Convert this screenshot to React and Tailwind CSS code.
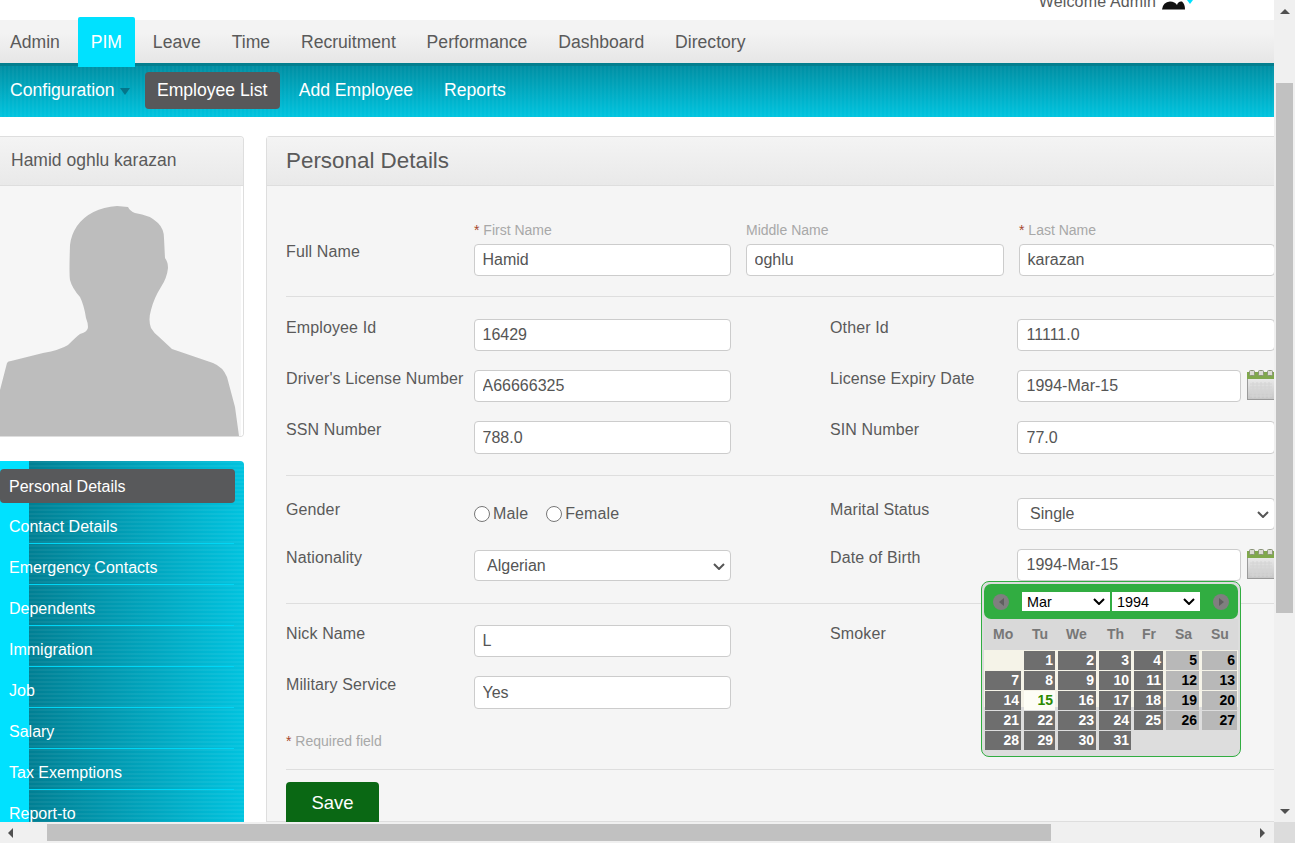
const NAV_ITEMS = ['Admin', 'PIM', 'Leave', 'Time', 'Recruitment', 'Performance', 'Dashboard', 'Directory'];

const SIDE_ITEMS = ['Contact Details', 'Emergency Contacts', 'Dependents', 'Immigration', 'Job', 'Salary', 'Tax Exemptions', 'Report-to'];

const WEEKDAYS = [
  { label: 'Mo', align: 'pl-[8px]' },
  { label: 'Tu', align: 'pl-[8px]' },
  { label: 'We', align: 'pl-[8px]' },
  { label: 'Th', align: 'pl-[8px]' },
  { label: 'Fr', align: 'pl-[8px]' },
  { label: 'Sa', align: 'pl-[9px]' },
  { label: 'Su', align: 'pl-[9px]' },
];

const SILHOUETTE =
  'M117 16 L128 17 Q130 21 135 23 Q150 25 158 33 Q164 39 164 48 L165 68 Q168 72 168 78 Q167 88 161 97 Q154 108 151 120 Q148 130 151 138 Q154 143 158 146 L172 159 L213 173 Q223 177 227 187 L235 217 L239 246 L0 246 L0 200 L7 173 Q8 171 11 171 L43 163 Q60 160 68 155 Q76 147 80 144 Q88 142 88 137 Q88 133 86 128 Q84 115 80 107 Q72 98 70 90 Q69 84 70 55 Q71 45 77 36 Q90 18 117 16 Z';

function CalendarIcon({ id }) {
  return (
    <svg width="28" height="30" viewBox="0 0 28 30" className="shrink-0 ml-[6px]">
      <defs>
        <linearGradient id={id} x1="0" y1="0" x2="0" y2="1">
          <stop offset="0" stopColor="#f2f2f2" />
          <stop offset="1" stopColor="#c6c6c6" />
        </linearGradient>
      </defs>
      <rect x="0.5" y="3.5" width="27" height="26" fill={`url(#${id})`} stroke="#9a9a9a" />
      <path d="M3 14h22M3 17h22M3 20h22M3 23h22M3 26h22M6 12v16M10 12v16M14 12v16M18 12v16M22 12v16" stroke="#d4d4d4" strokeWidth="1" />
      <rect x="0" y="2" width="28" height="7" fill="#80a84c" />
      <rect x="2.5" y="0.5" width="5" height="5" rx="1" fill="#dcdcd4" stroke="#8a9478" />
      <rect x="11.5" y="0.5" width="5" height="5" rx="1" fill="#dcdcd4" stroke="#8a9478" />
      <rect x="20.5" y="0.5" width="5" height="5" rx="1" fill="#dcdcd4" stroke="#8a9478" />
    </svg>
  );
}

function Chevron({ className }) {
  return (
    <svg width="12" height="7" viewBox="0 0 12 7" className={`absolute pointer-events-none ${className}`}>
      <path d="M1 1 L6 6 L11 1" fill="none" stroke="currentColor" strokeWidth="2" />
    </svg>
  );
}

function TextInput({ value, width = 'w-[257px]', height = 'h-[32px]', pad = 'px-[7.5px]' }) {
  return (
    <input
      type="text"
      defaultValue={value}
      className={`${width} ${height} ${pad} shrink-0 bg-white border border-[#cccccc] rounded-[4px] text-[16px] text-[#555555]`}
    />
  );
}

function SelectInput({ value, width, height, className = '' }) {
  return (
    <div className={`relative shrink-0 ${width} ${height} ${className}`}>
      <select
        defaultValue={value}
        className="block appearance-none w-full h-full pl-[12px] bg-white border border-[#cccccc] rounded-[4px] text-[16px] text-[#555555]"
      >
        <option>{value}</option>
      </select>
      <Chevron className="right-[6px] top-[13px] text-[#555555]" />
    </div>
  );
}

function CalendarSelect({ value, className = '' }) {
  return (
    <div className={`relative w-[88px] h-[19px] shrink-0 ${className}`}>
      <select defaultValue={value} className="block appearance-none w-full h-full pl-[5px] bg-white text-[14.4px] leading-[16px] text-black">
        <option>{value}</option>
      </select>
      <Chevron className="right-[5px] top-[6px] text-black" />
    </div>
  );
}

function Label({ children, width = 'w-[188px]', top = 'pt-0' }) {
  return <div className={`${width} ${top} shrink-0 text-[16px] leading-[18px] tracking-[0.12px] text-[#5a5a5a]`}>{children}</div>;
}

function NameField({ label, value, required, width }) {
  return (
    <div className={`${width} flex flex-col shrink-0`}>
      <div className="h-[22px] text-[14px] leading-[16px] text-[#a8a8a8]">
        {required && <span className="text-[#a5482c]">* </span>}
        {label}
      </div>
      <TextInput value={value} width="w-full" />
    </div>
  );
}

function Separator({ className }) {
  return <div className={`h-px bg-[#dedede] ${className}`} />;
}

function DatePicker() {
  const days = [];
  for (let d = 1; d <= 31; d++) days.push(d);
  return (
    <div className="absolute left-[-36px] top-[32px] z-20 w-[260px] h-[176px] bg-[#dddddd] border border-[#31ad41] rounded-[8px] p-[2px]">
      <div className="h-[35px] bg-[#31ad41] rounded-[7px] flex items-center pl-[9px]">
        <div className="w-[16px] h-[16px] rounded-full bg-[#7f7f7f] flex items-center justify-center">
          <div className="w-0 h-0 border-y-[4px] border-y-transparent border-r-[5px] border-r-[#5f5f5f]" />
        </div>
        <CalendarSelect value="Mar" className="ml-[13px]" />
        <CalendarSelect value="1994" className="ml-[2px]" />
        <div className="ml-[13px] w-[16px] h-[16px] rounded-full bg-[#7f7f7f] flex items-center justify-center">
          <div className="w-0 h-0 border-y-[4px] border-y-transparent border-l-[5px] border-l-[#5f5f5f]" />
        </div>
      </div>
      <div className="h-[31px] bg-[#d9d9d9] grid grid-cols-[36px_31px_38px_32px_29px_33px_35px] gap-x-[3px] pl-[1px] items-center text-[14px] font-bold text-[#777777]">
        {WEEKDAYS.map((w) => (
          <div key={w.label} className={w.align}>{w.label}</div>
        ))}
      </div>
      <div className="bg-[linear-gradient(180deg,#f5f3e8_57px,#dddddd_57px)] pt-px pl-px grid grid-cols-[36px_31px_38px_32px_29px_33px_35px] gap-x-[3px] gap-y-px auto-rows-[19px] text-[14px] leading-[19px] font-bold text-right">
        <div />
        {days.map((d) => {
          const col = d % 7;
          const weekend = col === 5 || col === 6;
          if (d === 15) {
            return <div key={d} className="bg-[#fdfdf5] text-[#2c8a00] pr-[2px]">{d}</div>;
          }
          return (
            <div key={d} className={`pr-[2px] ${weekend ? 'bg-[#b8b8b8] text-black' : 'bg-[#6e6e6e] text-white'}`}>{d}</div>
          );
        })}
      </div>
    </div>
  );
}

function Sidebar() {
  return (
    <div className="w-[244px] shrink-0 flex flex-col">
      <div className="h-[301px] shrink-0 flex flex-col border border-l-0 border-[#dedede] rounded-tr-[4px] rounded-br-[4px] overflow-hidden">
        <div className="h-[49px] shrink-0 border-b border-[#dedede] bg-[linear-gradient(180deg,#f4f4f4,#e9e9e9)] pl-[11px] pb-[2px] flex items-center text-[17.5px] text-[#5a5a5a]">
          Hamid oghlu karazan
        </div>
        <div className="flex-1 bg-[#f6f6f6] border-r-[2px] border-white">
          <svg width="241" height="250" viewBox="0 0 241 250" className="block">
            <path d={SILHOUETTE} transform="translate(0 4)" fill="#bdbdbd" />
          </svg>
        </div>
      </div>
      <div className="mt-[24px] shrink-0 rounded-tr-[4px] pt-[8px] bg-[linear-gradient(90deg,#00e1ff_29px,transparent_29px),repeating-linear-gradient(180deg,rgba(255,255,255,0.05)_0_2px,transparent_2px_4px),linear-gradient(90deg,#007f93_29px,#00c3df_100%)] text-[16px] text-white">
        <div className="w-[235px] h-[34px] flex items-center pl-[9px] pt-[2px] bg-[#58595b] rounded-[4px]">Personal Details</div>
        {SIDE_ITEMS.map((item) => (
          <div key={item} className="h-[41px] flex flex-col">
            <div className="h-[40px] pl-[9px] pt-[14px] leading-[20px]">{item}</div>
            <div className="h-px ml-[29px] mr-[10px] bg-[#00d6f5]" />
          </div>
        ))}
      </div>
    </div>
  );
}

function PersonalDetails() {
  return (
    <div className="ml-[22px] flex-1 min-w-0 border border-r-0 border-[#dedede] rounded-tl-[4px] bg-[#f5f5f5]">
      <div className="h-[49px] border-b border-[#dedede] bg-[linear-gradient(180deg,#f4f4f4,#e9e9e9)] pl-[19px] flex items-center text-[22.4px] text-[#5a5a5a]">
        Personal Details
      </div>
      <div className="pl-[19px] pt-[36px]">
        <div className="flex">
          <Label top="pt-[21px]">Full Name</Label>
          <div className="flex gap-[15px]">
            <NameField label="First Name" value="Hamid" required width="w-[257px]" />
            <NameField label="Middle Name" value="oghlu" width="w-[258px]" />
            <NameField label="Last Name" value="karazan" required width="w-[256px]" />
          </div>
        </div>
        <Separator className="mt-[20px]" />

        <div className="mt-[22px] flex">
          <Label>Employee Id</Label>
          <TextInput value="16429" />
          <Label width="w-[187px] ml-[99px]">Other Id</Label>
          <TextInput value="11111.0" width="w-[258px]" pad="px-[8.5px]" />
        </div>
        <div className="mt-[19px] flex">
          <Label>Driver's License Number</Label>
          <TextInput value="A66666325" />
          <Label width="w-[187px] ml-[99px]">License Expiry Date</Label>
          <TextInput value="1994-Mar-15" width="w-[224px]" pad="px-[8.5px]" />
          <CalendarIcon id="calBodyExpiry" />
        </div>
        <div className="mt-[19px] flex">
          <Label>SSN Number</Label>
          <TextInput value="788.0" height="h-[33px]" />
          <Label width="w-[187px] ml-[99px]">SIN Number</Label>
          <TextInput value="77.0" width="w-[258px]" height="h-[33px]" pad="px-[8.5px]" />
        </div>
        <Separator className="mt-[21px]" />

        <div className="mt-[22px] flex">
          <Label top="pt-[3px]">Gender</Label>
          <div className="w-[257px] shrink-0 flex items-start pt-[7px] text-[16px] leading-[18px] tracking-[0.12px] text-[#5a5a5a]">
            <input type="radio" name="gender" className="w-[16px] h-[16px] m-0 mt-px" />
            <span className="ml-[3px]">Male</span>
            <input type="radio" name="gender" className="w-[16px] h-[16px] m-0 mt-px ml-[18px]" />
            <span className="ml-[3px]">Female</span>
          </div>
          <Label width="w-[187px] ml-[99px]" top="pt-[3px]">Marital Status</Label>
          <SelectInput value="Single" width="w-[258px]" height="h-[32px]" />
        </div>
        <div className="mt-[19px] flex">
          <Label>Nationality</Label>
          <SelectInput value="Algerian" width="w-[257px]" height="h-[31px]" className="mt-px" />
          <Label width="w-[187px] ml-[99px]">Date of Birth</Label>
          <div className="relative flex shrink-0">
            <TextInput value="1994-Mar-15" width="w-[224px]" pad="px-[8.5px]" />
            <CalendarIcon id="calBodyBirth" />
            <DatePicker />
          </div>
        </div>
        <Separator className="mt-[22px]" />

        <div className="mt-[21px] flex">
          <Label>Nick Name</Label>
          <TextInput value="L" />
          <Label width="w-[187px] ml-[99px]">Smoker</Label>
        </div>
        <div className="mt-[19px] flex">
          <Label>Military Service</Label>
          <TextInput value="Yes" height="h-[33px]" />
        </div>
        <div className="mt-[24px] h-[16px] text-[14px] leading-[16px] text-[#a8a8a8]">
          <span className="text-[#a5482c]">* </span>Required field
        </div>
        <Separator className="mt-[20px]" />
        <button className="mt-[12px] w-[93px] h-[44px] pb-[3px] bg-[#0a6814] rounded-[4px] text-[18.5px] text-white">Save</button>
      </div>
    </div>
  );
}

function VerticalScrollbar() {
  return (
    <div className="w-[21px] shrink-0 bg-[#f0f0f0] flex flex-col items-center">
      <div className="h-[21px] flex items-center justify-center pt-[2px]">
        <div className="w-0 h-0 border-x-[5px] border-x-transparent border-b-[5px] border-b-[#505050]" />
      </div>
      <div className="mt-[62px] w-[17px] h-[530px] bg-[#c1c1c1]" />
      <div className="mt-auto h-[21px] flex items-center justify-center">
        <div className="w-0 h-0 border-x-[5px] border-x-transparent border-t-[5px] border-t-[#505050]" />
      </div>
    </div>
  );
}

function HorizontalScrollbar() {
  return (
    <div className="h-[21px] shrink-0 bg-[#f0f0f0] flex items-center">
      <div className="w-[21px] flex justify-center">
        <div className="w-0 h-0 border-y-[5px] border-y-transparent border-r-[5px] border-r-[#505050]" />
      </div>
      <div className="ml-[26px] w-[1004px] h-[17px] bg-[#c1c1c1]" />
      <div className="ml-auto w-[21px] flex justify-center">
        <div className="w-0 h-0 border-y-[5px] border-y-transparent border-l-[5px] border-l-[#505050]" />
      </div>
      <div className="ml-[1px] w-[21px] h-full bg-[#dcdcdc]" />
    </div>
  );
}

export default function App() {
  return (
    <div className="w-[1295px] h-[843px] flex flex-col overflow-hidden bg-white font-['Liberation_Sans',Arial,sans-serif]">
      <div className="flex-1 min-h-0 flex">
        <div className="w-[1274px] shrink-0 flex flex-col overflow-hidden">
          <div className="h-[20px] shrink-0 relative overflow-hidden flex justify-end pr-[81px] items-end">
            <span className="text-[16px] leading-[18px] mb-[9px] tracking-[0.15px] text-[#5a5a5a]">Welcome Admin</span>
            <svg width="31" height="10" viewBox="0 0 31 10" className="ml-[6px] mb-[10px] shrink-0">
              <path d="M0 9.5 Q1 2 8 1.5 Q13 1.5 15 5 Q16 1 20 1.5 Q23 4 23 9.5 Z" fill="#111111" />
              <path d="M25 0 H31 L28 4 Z" fill="#00e1ff" />
            </svg>
          </div>
          <div className="h-[43px] shrink-0 bg-[linear-gradient(180deg,#f3f3f3_30%,#e6e6e6)] flex items-center pl-[10px] pt-[1px] gap-[30.85px] text-[17.6px] text-[#5a5a5a]">
            {NAV_ITEMS.map((item) =>
              item === 'PIM' ? (
                <div key={item} className="relative z-10 -mx-[13px] px-[13px] self-start -mt-[4px] h-[50px] bg-[#00e1ff] rounded-t-[2px] text-white flex items-center">
                  {item}
                </div>
              ) : (
                <div key={item}>{item}</div>
              )
            )}
          </div>
          <div className="h-[54px] shrink-0 border-t-[3px] border-[#047f8f] bg-[repeating-linear-gradient(90deg,rgba(255,255,255,0.03)_0_2px,transparent_2px_4px),linear-gradient(180deg,#008fa3,#00c4df)] flex items-center pl-[10px] pb-[2px] text-[17.6px] text-white">
            <span>Configuration</span>
            <div className="ml-[5px] mt-[2px] w-0 h-0 border-x-[5px] border-x-transparent border-t-[7px] border-t-[#05758a]" />
            <div className="ml-[15px] w-[135px] h-[37px] flex items-center justify-center bg-[#58585a] rounded-[4px]">Employee List</div>
            <span className="ml-[19px]">Add Employee</span>
            <span className="ml-[31px]">Reports</span>
          </div>
          <div className="flex-1 min-h-0 flex pt-[19px] overflow-hidden">
            <Sidebar />
            <PersonalDetails />
          </div>
        </div>
        <VerticalScrollbar />
      </div>
      <HorizontalScrollbar />
    </div>
  );
}
